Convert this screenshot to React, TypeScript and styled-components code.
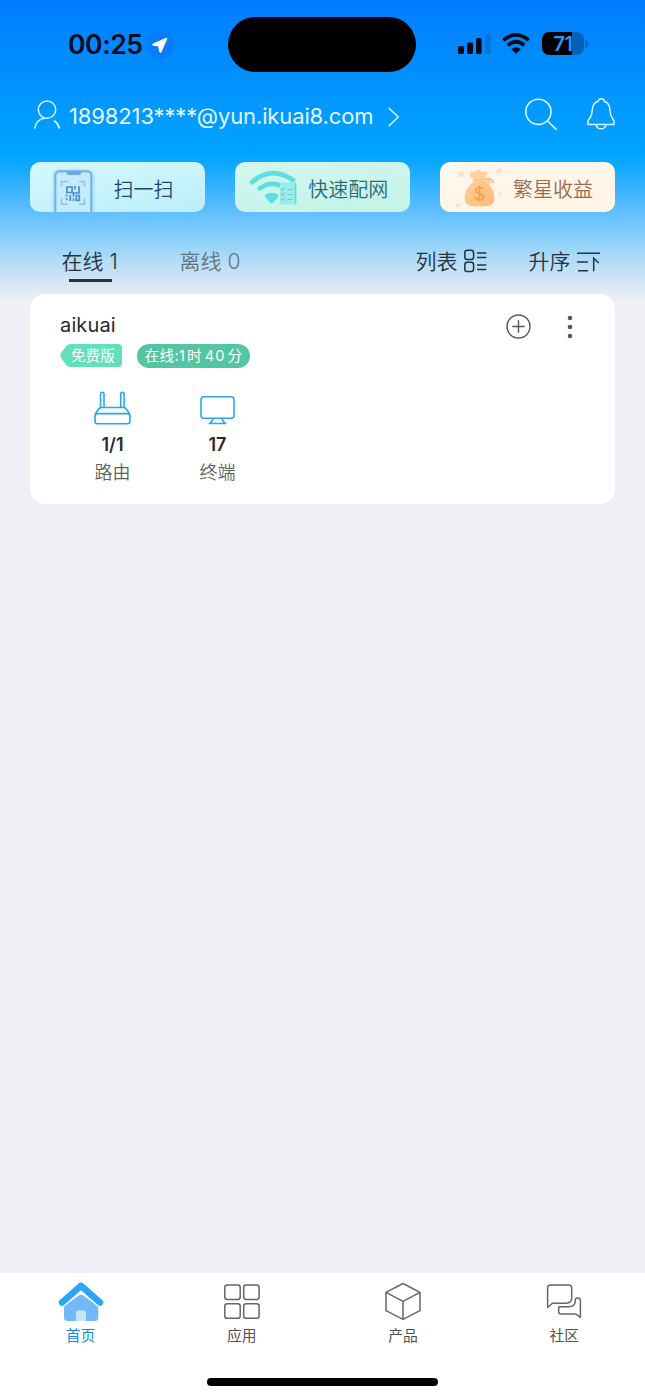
import React from 'react';
import styled, { createGlobalStyle, css } from 'styled-components';

const GlobalStyle = createGlobalStyle`
  * { box-sizing: border-box; }
  body { margin: 0; background: #eff0f5; }
  svg { display: block; flex: none; overflow: visible; }
`;

const Screen = styled.div`
  width: 645px;
  height: 1398px;
  display: flex;
  flex-direction: column;
  overflow: hidden;
  font-family: Inter, 'Noto Sans CJK SC', sans-serif;
  color: #2c2f35;
  background: linear-gradient(
    180deg,
    #007dff 0,
    #00a4ff 152px,
    #0fa8ff 165px,
    #60bfff 212px,
    #84cefc 235px,
    #b5dcf6 262px,
    #d8e7f5 285px,
    #eff0f5 302px,
    #eff0f5 100%
  );
`;

const StatusBar = styled.header`
  height: 88px;
  display: flex;
  align-items: flex-start;
  padding: 17px 57px 0 68px;
`;

const Clock = styled.div`
  width: 160.4px;
  height: 54px;
  display: flex;
  align-items: center;
  gap: 4px;
  white-space: nowrap;
  color: #020b1c;
`;

const Time = styled.span`
  width: 75px;
  font-size: 26.5px;
  font-weight: 600;
  letter-spacing: -0.4px;
`;

const Island = styled.div`
  width: 188px;
  height: 55px;
  border-radius: 28px;
  background: #000;
`;

const Signals = styled.div`
  height: 53px;
  margin-left: auto;
  display: flex;
  align-items: center;
  gap: 11px;
`;

const Battery = styled.div`
  width: 46px;
  height: 23px;
  display: flex;
  align-items: center;
  gap: 1px;
`;

const BatteryCell = styled.div`
  width: 42px;
  height: 23px;
  border-radius: 7px;
  display: flex;
  align-items: center;
  justify-content: center;
  background: linear-gradient(90deg, #000 30px, #0462b5 30px);
  color: #2f97f8;
  font-size: 20px;
  font-weight: 600;
  letter-spacing: -0.5px;
`;

const BatteryTip = styled.div`
  width: 3px;
  height: 8px;
  border-radius: 0 4px 4px 0;
  background: #0668bf;
`;

const AccountBar = styled.div`
  height: 56px;
  display: flex;
  align-items: center;
  padding: 0 30px 0 34px;
`;

const AccountName = styled.span`
  width: 304px;
  margin-left: 9px;
  margin-right: 15px;
  font-size: 22px;
  line-height: 28px;
  letter-spacing: -0.13px;
  white-space: nowrap;
  color: #e4f8ff;
`;

const HeaderTools = styled.div`
  margin-left: auto;
  display: flex;
  align-items: center;
  gap: 30px;
  margin-top: -4px;
`;

const Actions = styled.div`
  margin: 18px 30px 0;
  display: grid;
  grid-template-columns: repeat(3, 1fr);
  gap: 30px;
`;

const Action = styled.button<{ $from: string; $to: string; $ink: string }>`
  height: 50px;
  padding: 0;
  border: 0;
  border-radius: 10px;
  display: flex;
  align-items: stretch;
  overflow: hidden;
  font-family: inherit;
  font-size: 20px;
  line-height: 50px;
  white-space: nowrap;
  color: ${p => p.$ink};
  background: linear-gradient(170deg, ${p => p.$from}, ${p => p.$to});
`;

const ActionLabel = styled.span`
  padding-top: 3px;
  font-weight: 350;
`;

const FilterBar = styled.div`
  height: 82px;
  padding: 35px 45px 0 61.5px;
  display: flex;
  align-items: flex-start;
  font-size: 21px;
  font-weight: 350;
  line-height: 30px;
  white-space: nowrap;
`;

const Tab = styled.div<{ $active?: boolean }>`
  width: 118px;
  display: flex;
  flex-direction: column;
  color: #65737e;
  ${p => p.$active && css`
    color: #26333e;
    &::after {
      content: '';
      width: 43px;
      height: 3px;
      margin: 2px 0 0 7px;
      background: #29333c;
    }
  `}
`;

const FilterTools = styled.div`
  margin-left: auto;
  display: flex;
  gap: 41.5px;
`;

const FilterTool = styled.div`
  display: flex;
  align-items: center;
  gap: 6.5px;
  color: #25343f;
  svg { margin-top: -1px; }
`;

const RouterCard = styled.section`
  height: 210px;
  margin: 0 30px;
  padding: 18px 30px;
  border-radius: 15px;
  background: #fff;
`;

const CardHead = styled.div`
  display: flex;
  height: 26px;
  align-items: flex-start;
`;

const CardTitle = styled.h2`
  margin: 0;
  font-size: 20px;
  font-weight: 400;
  line-height: 26px;
  letter-spacing: 0.15px;
  color: #28292c;
`;

const CardTools = styled.div`
  margin: 2px 10px 0 auto;
  display: flex;
  align-items: center;
  gap: 34px;
`;

const Badges = styled.div`
  margin-top: 5px;
  display: flex;
  align-items: center;
  gap: 15px;
  height: 25px;
`;

const PlanBadge = styled.span`
  display: flex;
  height: 23px;
  color: #fff;
  font-size: 14.6px;
  line-height: 25px;
`;

const PlanLabel = styled.span`
  width: 52px;
  padding-left: 1px;
  border-radius: 0 4px 4px 0;
  background: #63dfb9;
  white-space: nowrap;
`;

const UptimeBadge = styled.span`
  width: 113px;
  height: 24px;
  border-radius: 12px;
  display: flex;
  justify-content: center;
  background: #53c5a2;
  color: #fff;
  font-size: 14.6px;
  line-height: 25px;
  letter-spacing: 0.3px;
  white-space: nowrap;
`;

const UptimeNumber = styled.span<{ $before?: number; $after?: number }>`
  margin-left: ${p => p.$before ?? 0}px;
  margin-right: ${p => p.$after ?? 0}px;
  letter-spacing: 1px;
`;

const Stats = styled.div`
  display: flex;
  margin-top: 22.5px;
`;

const Stat = styled.div`
  width: 105px;
  display: flex;
  flex-direction: column;
  align-items: center;
`;

const StatValue = styled.strong`
  margin-top: 8.5px;
  font-size: 18px;
  font-weight: 600;
  line-height: 24px;
  color: #2b2b2b;
`;

const StatLabel = styled.span`
  margin-top: 3px;
  font-size: 18px;
  font-weight: 350;
  line-height: 26px;
  color: #5f5f5f;
`;

const BottomNav = styled.nav`
  height: 125px;
  margin-top: auto;
  display: flex;
  flex-direction: column;
  align-items: center;
  background: #fff;
`;

const NavItems = styled.div`
  width: 100%;
  height: 105px;
  display: grid;
  grid-template-columns: repeat(4, 1fr);
`;

const NavItem = styled.div<{ $active?: boolean }>`
  display: flex;
  flex-direction: column;
  align-items: center;
  padding-top: 8px;
  font-size: 14.8px;
  font-weight: 400;
  line-height: 22px;
  color: ${p => (p.$active ? '#0f8ce8' : '#505050')};
  svg { margin-bottom: 2px; }
`;

const HomeIndicator = styled.div`
  width: 231px;
  height: 8px;
  border-radius: 4px;
  background: #000;
`;

const LocationIcon = () => (
  <svg width="28" height="28" viewBox="0 0 28 28">
    <circle cx="13.5" cy="14.5" r="13.5" fill="#087bff" />
    <path d="M19 8.3 5.9 14.1Q5 14.8 6 15.2L11.7 16 12.7 22Q13.3 23.1 14 22L19.7 9Q19.9 8.1 19 8.3Z" fill="#fff" stroke="#fff" strokeLinejoin="round" />
  </svg>
);

const CellularIcon = () => (
  <svg width="33" height="20" viewBox="0 0 33 20">
    <rect x="0" y="12" width="6" height="8" rx="1.6" fill="#020b1c" />
    <rect x="9" y="8.5" width="6" height="11.5" rx="1.6" fill="#020b1c" />
    <rect x="18" y="4" width="5.6" height="16" rx="1.6" fill="#020b1c" />
    <rect x="27" y="-.5" width="5.6" height="20.5" rx="1.6" fill="#0474d6" />
  </svg>
);

const WifiIcon = () => (
  <svg width="29" height="21" viewBox="0 0 29 21" fill="none" stroke="#020b1c" strokeWidth="3.8">
    <path d="M1.3 7.2Q14-3.4 26.7 7.2" />
    <path d="M5.7 12.2Q14 5.4 22.3 12.2" />
    <path d="M14 20.8 9.3 16.2Q14 12.4 18.7 16.2Z" fill="#020b1c" stroke="none" />
  </svg>
);

const UserIcon = () => (
  <svg width="26" height="33" viewBox="0 0 26 33" fill="none" stroke="#d8f8ff" strokeWidth="1.5" strokeLinecap="round">
    <circle cx="13" cy="9.6" r="8.7" />
    <path d="M.8 28C1.5 22.5 5.5 18.6 10.6 18.2M20.4 20.8Q24.4 23.6 25.2 28" />
  </svg>
);

const ChevronIcon = () => (
  <svg width="11" height="20" viewBox="0 0 11 20" fill="none" stroke="#d8f8ff" strokeWidth="1.5">
    <path d="M.8 2 10.2 11 .8 20" />
  </svg>
);

const SearchIcon = () => (
  <svg width="32" height="32" viewBox="0 0 32 32" fill="none" stroke="#d8f8ff" strokeWidth="1.6" strokeLinecap="round">
    <circle cx="13.4" cy="13.8" r="12.6" />
    <path d="M22.5 23 31.2 31.3" />
  </svg>
);

const BellIcon = () => (
  <svg width="28" height="32" viewBox="0 0 28 32" fill="none" stroke="#d8f8ff" strokeWidth="1.5" strokeLinejoin="round">
    <path d="M11.2 3.2Q11.5.8 14.2.8T17.2 3.2Q22.6 5 22.9 11.5C23.2 19 25 19.5 27 22.7V26.5H1V22.7C3.2 19.5 5 19 5.3 11.5Q5.7 5 11.2 3.2Z" />
    <path d="M9.3 26.8C9.8 32.2 18.3 32.2 18.8 26.8" />
  </svg>
);

const ScanPicture = () => (
  <svg width="83.5" height="50" viewBox="0 0 83.5 50" fill="none">
    <rect x="22" y="7" width="43" height="60" rx="7" fill="#87c9f0" opacity=".3" />
    <rect x="25.3" y="9.3" width="36" height="56" rx="4" fill="#c5eafc" stroke="#73b5e8" strokeWidth="2.2" />
    <path d="M36 9H52L50.5 13H37.5Z" fill="#64aee5" />
    <path d="M31.5 24.5V19.5H38M49 19.5H54.5V24.5M31.5 36.5V42.3H38M49 42.3H54.5V36.5" stroke="#8bc3ed" strokeWidth="1.5" />
    <g stroke="#488fd3" strokeWidth="1.7">
      <path d="M36.9 25H42.1V30.5H36.9ZM45 24V27.5M49 24V31H43.5V34.5M36.7 32.5V34.5M36.7 36.3V38.3M40.3 33V39M43.5 36.3V39M46.3 33.5H49.3V38.3H46.3Z" />
    </g>
  </svg>
);

const SetupPicture = () => (
  <svg width="73.2" height="50" viewBox="0 0 73.2 50" fill="none">
    <g stroke="#5cdfe0" strokeLinecap="round">
      <path d="M17 20.2Q36 3 58 18" strokeWidth="4.6" />
      <path d="M24.8 26.5Q36 18 49 25" strokeWidth="4.6" />
    </g>
    <path d="M30.2 32.6Q36.5 28.8 43 32.6 44 34 42.5 36L38 40.7Q36.6 42.2 35 40.7L31 36Q29 34 30.2 32.6Z" fill="#5cdfe0" />
    <rect x="45" y="20.5" width="16.5" height="22" rx="1" fill="#9aecea" />
    <path d="M60.5 20.5V41.5" stroke="#68d3d9" strokeWidth="1.4" />
    <path d="M46 27 47.5 28.2 50 25.8M46 32 47.5 33.2 50 30.8M46 37 47.5 38.2 50 35.8M52.5 27.5H57.5M52.5 32.5H57.5M52.5 37.5H57.5" stroke="#70c8d3" strokeWidth="1.1" />
  </svg>
);

const MoneyPicture = () => (
  <svg width="73" height="50" viewBox="0 0 73 50">
    <defs>
      <linearGradient id="moneyBag" x1="0" y1="0" x2="1" y2="1">
        <stop offset="0" stopColor="#ffd096" />
        <stop offset="1" stopColor="#ffb97c" />
      </linearGradient>
    </defs>
    <g fill="#fbe2c9">
      <path d="M21 8.5 23 10.5 25 11.5 23.5 13.2 23 15.5 20.7 14.6 18.5 15 18.5 12.5 17.5 10.5 20 10.2Z" />
      <path d="M59 5 61 7 63 7.6 61.6 9.6 61.8 11.6 59.2 11.2 56.5 12 56.8 9.4 55.5 7.5 58 7Z" />
      <circle cx="18" cy="43.5" r="2" />
      <circle cx="59.5" cy="31.5" r="1.8" />
    </g>
    <path d="M30 14.5Q29 9 32.8 9.3 35 10.5 36.5 8.2 39.5 7 41 9.5 45.5 8.5 48.3 10.8 46.7 13.7 45 16.5L34 17.7Z" fill="#fdd4a0" />
    <path d="M34 19.5 45.8 18Q55.5 29 54.3 38 53.5 44.2 45 44.2H34Q24.8 44.2 24.5 36.5C24.5 28 29 23.5 34 19.5Z" fill="url(#moneyBag)" />
    <path d="M33.5 18.4 46.5 17Q50.5 15.5 53.5 20.5M46 17Q49 18.5 49.5 20.5" stroke="#fdc38b" strokeWidth="2" fill="none" strokeLinecap="round" />
    <path d="M43.6 27.3C41.8 24.7 35.5 25 35.5 28.6S43.8 31 43.8 34.8 37 38.2 34.8 35.2M39.5 23.2V39.5" fill="none" stroke="#f8a14e" strokeWidth="1.8" />
  </svg>
);

const ListIcon = () => (
  <svg width="23" height="23" viewBox="0 0 23 23" fill="none" stroke="#25343f" strokeWidth="1.5">
    <rect x=".8" y=".3" width="8.8" height="9.2" rx="2.6" />
    <rect x=".8" y="12.3" width="8.8" height="9.2" rx="2.6" />
    <path d="M13 3.1H22.3M13 7.5H22.3M13 15.1H22.3M13 19.5H22.3" />
  </svg>
);

const SortIcon = () => (
  <svg width="23" height="20" viewBox="0 0 23 20" fill="none" stroke="#25343f" strokeWidth="1.5">
    <path d="M0 1.3H23M0 10H11M1 18.7H11M16.7 19.3V6.2L21.8 11" />
  </svg>
);

const AddIcon = () => (
  <svg width="25" height="25" viewBox="0 0 25 25" fill="none" stroke="#555" strokeWidth="1.4">
    <circle cx="12.5" cy="12.5" r="11.5" />
    <path d="M6.3 12.5H18.7M12.5 6.3V18.7" />
  </svg>
);

const MoreIcon = () => (
  <svg width="10" height="24" viewBox="0 0 10 24" fill="#595959">
    <circle cx="5" cy="3" r="2.3" />
    <circle cx="5" cy="12" r="2.3" />
    <circle cx="5" cy="21" r="2.3" />
  </svg>
);

const TagPoint = () => (
  <svg width="10" height="23" viewBox="0 0 10 23">
    <path d="M10.3 0Q8 0 6.5 1.7L.8 9.3Q-.6 11.5.8 13.7L6.5 21.3Q8 23 10.3 23Z" fill="#63dfb9" />
  </svg>
);

const RouterIcon = () => (
  <svg width="37" height="34" viewBox="0 0 37 34" fill="none" stroke="#27a9e9" strokeWidth="1.6">
    <path d="M6.6 16V3.2Q6.6 1.2 8.3 1.2T10 3.2V16M26.7 16V3.2Q26.7 1.2 28.4 1.2T30.1 3.2V16" />
    <path d="M1.3 23 4.2 18.5Q5.4 16.5 7.5 16.5H29.4Q31.5 16.5 32.7 18.5L35.6 23" />
    <rect x="1" y="22.6" width="35" height="10.2" rx="2.8" />
  </svg>
);

const MonitorIcon = () => (
  <svg width="35" height="34" viewBox="0 0 35 34" fill="none" stroke="#27a9e9" strokeWidth="1.6" strokeLinejoin="round">
    <rect x="1" y="5.8" width="33" height="21.5" rx="3" />
    <path d="M13 27.5Q12.3 30.7 9.5 32.5H25.5Q22.7 30.7 22 27.5" />
  </svg>
);

const HomeIcon = () => (
  <svg width="46" height="42" viewBox="0 0 46 42">
    <path d="M6.5 24.7 20.2 15Q23 12.5 25.8 15L39.5 24.7Q40.3 25.5 40.3 27V36.5Q40.3 40 36.5 40H9.8Q6 40 6 36.5V27Q6 25.5 6.5 24.7Z" fill="#72b9fa" />
    <path d="M4 21.5 23 5 42 21.5" fill="none" stroke="#fff" strokeWidth="9" strokeLinecap="round" strokeLinejoin="round" />
    <path d="M4 21.5 23 4.8 42 21.5" fill="none" stroke="#2aa6f7" strokeWidth="6.5" strokeLinecap="round" strokeLinejoin="round" />
    <path d="M18 40V31.5Q18 29.5 20.5 29.5H25.7Q28 29.5 28 31.5V40Z" fill="#c9e4fb" />
  </svg>
);

const AppsIcon = () => (
  <svg width="36" height="42" viewBox="0 0 36 42" fill="none" stroke="#666" strokeWidth="1.5">
    <rect x=".8" y="4" width="15.4" height="14.5" rx="2.4" />
    <rect x="19.7" y="4" width="15.4" height="14.5" rx="2.4" />
    <rect x=".8" y="22.8" width="15.4" height="14.5" rx="2.4" />
    <rect x="19.7" y="22.8" width="15.4" height="14.5" rx="2.4" />
  </svg>
);

const ProductIcon = () => (
  <svg width="36" height="42" viewBox="0 0 36 42" fill="none" stroke="#666" strokeWidth="1.5" strokeLinejoin="round">
    <path d="M18 2.5 35 11.4V29.7L18 38.3 1 29.7V11.4ZM1 11.4 18 20.3 35 11.4M18 20.3V38.3" />
  </svg>
);

const CommunityIcon = () => (
  <svg width="36" height="42" viewBox="0 0 36 42" fill="none" stroke="#666" strokeWidth="1.5" strokeLinejoin="round">
    <path d="M1.6 26.5V6.8Q1.6 4 4.4 4H23Q25.7 4 25.7 6.8V16.8Q25.7 22.2 20.2 22.2H6.5Z" />
    <path d="M13.4 25.7H22.9Q28.7 25.7 29.3 20.5V19Q29.3 16.9 31.8 16.9 34.4 16.9 34.4 19.5V36.4L29.9 33H14.9Q12.7 33 12.7 30.8V26.4Q12.7 25.7 13.4 25.7Z" />
  </svg>
);

export default function App() {
  return (
    <Screen>
      <GlobalStyle />
      <StatusBar>
        <Clock>
          <Time>00:25</Time>
          <LocationIcon />
        </Clock>
        <Island />
        <Signals>
          <CellularIcon />
          <WifiIcon />
          <Battery>
            <BatteryCell>71</BatteryCell>
            <BatteryTip />
          </Battery>
        </Signals>
      </StatusBar>

      <AccountBar>
        <UserIcon />
        <AccountName>1898213****@yun.ikuai8.com</AccountName>
        <ChevronIcon />
        <HeaderTools>
          <SearchIcon />
          <BellIcon />
        </HeaderTools>
      </AccountBar>

      <Actions>
        <Action $from="#d5f8fd" $to="#bceefb" $ink="#24466b">
          <ScanPicture />
          <ActionLabel>扫一扫</ActionLabel>
        </Action>
        <Action $from="#d3f6ee" $to="#c3f3e8" $ink="#276d7c">
          <SetupPicture />
          <ActionLabel>快速配网</ActionLabel>
        </Action>
        <Action $from="#fff8ef" $to="#fff4e4" $ink="#9a6a4a">
          <MoneyPicture />
          <ActionLabel>繁星收益</ActionLabel>
        </Action>
      </Actions>

      <FilterBar>
        <Tab $active>在线 1</Tab>
        <Tab>离线 0</Tab>
        <FilterTools>
          <FilterTool>列表<ListIcon /></FilterTool>
          <FilterTool>升序<SortIcon /></FilterTool>
        </FilterTools>
      </FilterBar>

      <RouterCard>
        <CardHead>
          <CardTitle>aikuai</CardTitle>
          <CardTools>
            <AddIcon />
            <MoreIcon />
          </CardTools>
        </CardHead>
        <Badges>
          <PlanBadge>
            <TagPoint />
            <PlanLabel>免费版</PlanLabel>
          </PlanBadge>
          <UptimeBadge>
            在线:<UptimeNumber $after={1}>1</UptimeNumber>时
            <UptimeNumber $before={3} $after={2}>40</UptimeNumber>分
          </UptimeBadge>
        </Badges>
        <Stats>
          <Stat>
            <RouterIcon />
            <StatValue>1/1</StatValue>
            <StatLabel>路由</StatLabel>
          </Stat>
          <Stat>
            <MonitorIcon />
            <StatValue>17</StatValue>
            <StatLabel>终端</StatLabel>
          </Stat>
        </Stats>
      </RouterCard>

      <BottomNav>
        <NavItems>
          <NavItem $active><HomeIcon />首页</NavItem>
          <NavItem><AppsIcon />应用</NavItem>
          <NavItem><ProductIcon />产品</NavItem>
          <NavItem><CommunityIcon />社区</NavItem>
        </NavItems>
        <HomeIndicator />
      </BottomNav>
    </Screen>
  );
}
